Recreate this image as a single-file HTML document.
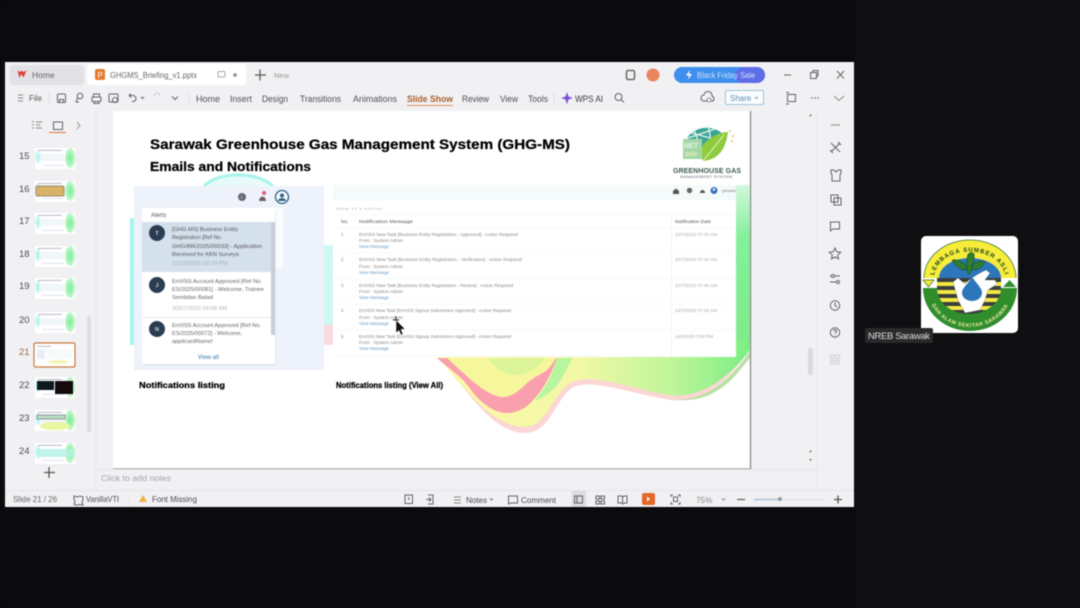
<!DOCTYPE html>
<html><head><meta charset="utf-8"><style>
html,body{margin:0;padding:0;width:1080px;height:608px;overflow:hidden;background:#0b0b0d}
svg{display:block;position:absolute;left:0;top:0;filter:blur(.45px)}
text{font-family:"Liberation Sans",sans-serif;fill:#4d4d50}
.r{font-size:9px;fill:#505054}
.b{font-weight:bold;fill:#000;stroke:#000;stroke-width:.25px}
.a{font-size:5.4px;fill:#666}
.d{font-size:5px;fill:#aab}
.m{font-size:4.5px;fill:#888}
.l{font-size:4.5px;fill:#6d9bc0}
.i{fill:none;stroke:#626367;stroke-width:1}
</style></head><body>
<svg width="1080" height="608" viewBox="0 0 1080 608" xmlns="http://www.w3.org/2000/svg">
<defs>
<linearGradient id="gr" x1="0" y1="0" x2="0" y2="1"><stop offset="0" stop-color="#d4f7dd"/><stop offset=".3" stop-color="#84f09a"/><stop offset="1" stop-color="#7eea88"/></linearGradient>
<linearGradient id="wv" x1="0" y1="0" x2="1" y2="0"><stop offset="0" stop-color="#fdf8a8"/><stop offset=".45" stop-color="#f2f8a6"/><stop offset=".75" stop-color="#bff59a"/><stop offset="1" stop-color="#7aef84"/></linearGradient>
<radialGradient id="gb"><stop offset="0" stop-color="#79ee92"/><stop offset="1" stop-color="#c8f7d2"/></radialGradient>
<radialGradient id="cb"><stop offset="0" stop-color="#a4f1ec"/><stop offset="1" stop-color="#e4faf8"/></radialGradient>
<g id="th"><rect x="0" y="0" width="40" height="21" fill="#fff"/><ellipse cx="35" cy="10" rx="5" ry="10" fill="url(#gb)"/><ellipse cx="3" cy="9" rx="3" ry="7" fill="url(#cb)"/><rect x="3" y="2" width="24" height=".8" fill="#aab"/><rect x="5" y="6" width="24" height="7" fill="#f1f6f9"/><rect x="7" y="17" width="22" height=".8" fill="#dde"/></g>
<path id="arcT" d="M934 278A35 26 0 0 1 1005 278"/>
<path id="arcB" d="M929 292A41 35 0 0 0 1011 292"/>
</defs>

<rect width="1080" height="608" fill="#0b0b0d"/>
<rect x="855" y="0" width="225" height="608" fill="#0f0f12"/>

<!-- window -->
<rect x="5" y="62" width="849" height="445" fill="#f1f1f4"/>
<rect x="10" y="65" width="74" height="20" rx="3" fill="#e2e2e6"/>
<rect x="87" y="64" width="159" height="21" rx="3" fill="#fff"/>
<path d="M18 71l1.500 6 2-3.500 2 3.500 2.500-6-2.500 1.500-2-1.500-2 1.500z" fill="#e2403a" stroke="#e2403a" stroke-width=".6"/>
<text x="32" y="78" font-size="8.500" style="fill:#666">Home</text>
<rect x="95" y="69" width="10" height="11" rx="2" fill="#e57a2c"/>
<text x="97.500" y="78" font-size="8" style="fill:#fff">P</text>
<text x="110" y="78" font-size="8.500" style="fill:#666" textLength="87" lengthAdjust="spacingAndGlyphs">GHGMS_Briefing_v1.pptx</text>
<rect x="218" y="71.500" width="7" height="5.500" rx="1" class="i" style="stroke:#aaa"/>
<circle cx="235" cy="75" r="1.700" fill="#888"/>
<path d="M260 69.500v11M255 75h11" stroke="#555" stroke-width="1.200"/>
<text x="274" y="78" font-size="7.500" style="fill:#999">New</text>
<rect x="626.500" y="70.500" width="8" height="9" rx="1.500" class="i" stroke-width="1.300" style="stroke:#555;stroke-width:1.300"/>
<circle cx="653" cy="75" r="6.500" fill="#e8875d"/>
<rect x="674" y="67" width="91" height="16" rx="8" fill="#3f8fee"/>
<rect x="735" y="67" width="30" height="16" rx="8" fill="#5d6de8"/>
<path d="M690 70l-4 5.500h3l-1 4 4-5.500h-3z" fill="#fff"/>
<text x="697" y="78" font-size="8" style="fill:#cfe1fa" textLength="58" lengthAdjust="spacingAndGlyphs">Black Friday Sale</text>
<path d="M784 75h7" stroke="#666"/>
<rect x="810.500" y="72.500" width="6" height="6" class="i"/><path d="M813 72v-1.500h5v5.500h-1.500" class="i"/>
<path d="M837 71l7 7.500M844 71l-7 7.500" stroke="#666"/>

<!-- ribbon -->
<path d="M18 95h5M18 98h5M18 101h5" stroke="#888"/>
<text x="29" y="101" font-size="8" style="fill:#555">File</text>
<path d="M49 92v12" stroke="#e2e2e5"/>
<rect x="57.500" y="94" width="8" height="8.500" rx="1" class="i"/><path d="M59.500 102.500v-3h4v3" class="i"/>
<circle cx="80" cy="96" r="2.800" class="i"/><path d="M77.500 98l-1.500 4h3" class="i"/>
<rect x="92" y="97" width="9" height="4.500" rx="1" class="i"/><path d="M93.500 97v-3h6v3M94 101v2.500h5v-2.500" class="i"/>
<rect x="109" y="94" width="9" height="8" rx="1" class="i"/><circle cx="115" cy="100" r="2.500" class="i"/>
<path d="M129 95.500h4a3 3 0 0 1 0 6h-1M129 95.500l2-2M129 95.500l2 2" class="i"/>
<path d="M141 97l1.500 1.500 1.500-1.500" class="i"/>
<path d="M154 96a3 3 0 0 1 6 0" class="i" style="stroke:#cfcfd2"/>
<path d="M172 96.500l3 3 3-3" class="i"/>
<path d="M189 92v12" stroke="#e2e2e5"/>
<text x="196" y="102" class="r" textLength="24" lengthAdjust="spacingAndGlyphs">Home</text>
<text x="230" y="102" class="r" textLength="22" lengthAdjust="spacingAndGlyphs">Insert</text>
<text x="262" y="102" class="r" textLength="26" lengthAdjust="spacingAndGlyphs">Design</text>
<text x="300" y="102" class="r" textLength="41" lengthAdjust="spacingAndGlyphs">Transitions</text>
<text x="353" y="102" class="r" textLength="44" lengthAdjust="spacingAndGlyphs">Animations</text>
<text x="407" y="102" class="r" textLength="46" lengthAdjust="spacingAndGlyphs" style="font-weight:bold;fill:#a8622f">Slide Show</text>
<rect x="407" y="105" width="46" height="1" fill="#d98e55"/>
<text x="462" y="102" class="r" textLength="27" lengthAdjust="spacingAndGlyphs">Review</text>
<text x="500" y="102" class="r" textLength="18" lengthAdjust="spacingAndGlyphs">View</text>
<text x="528" y="102" class="r" textLength="20" lengthAdjust="spacingAndGlyphs">Tools</text>
<path d="M554 92v12" stroke="#e2e2e5"/>
<path d="M567 92l1.500 4.500 4.500 1.500-4.500 1.500-1.500 5-1.500-5-4.500-1.500 4.500-1.500z" fill="#7b52d8"/>
<text x="575" y="102" class="r" textLength="28" lengthAdjust="spacingAndGlyphs" style="fill:#3c3c40">WPS AI</text>
<circle cx="618.500" cy="97" r="3.500" class="i"/><path d="M621 99.500l3 3" class="i"/>
<path d="M704 101a3 3 0 0 1 0-6 4 4 0 0 1 8 1 3 3 0 0 1 1 5z" class="i"/><circle cx="709" cy="100" r="2" fill="#f1f1f4" stroke="#777" stroke-width=".8"/>
<rect x="725.500" y="90.500" width="38" height="14" rx="1.500" fill="#fafcff" stroke="#9cc2da"/>
<text x="730" y="101" font-size="8" style="fill:#5c90b4">Share</text>
<path d="M755 97l1.500 1.500 1.500-1.500" stroke="#999" fill="none"/>
<rect x="787.500" y="94.500" width="8" height="7" class="i"/><path d="M786 92.500h3M789 104h-3" class="i"/>
<circle cx="812" cy="98" r=".7" fill="#555"/><circle cx="815" cy="98" r=".7" fill="#555"/><circle cx="818" cy="98" r=".7" fill="#555"/>
<path d="M834 96l5 4.500 5-4.500" stroke="#888" fill="none"/>

<!-- left panel -->
<path d="M96 110v380" stroke="#e8e8eb"/>
<path d="M32 121.500h2M32 124.500h2M32 128h2M36 122h6M36 125h4M36 128h6" stroke="#888"/>
<rect x="53.500" y="122" width="9" height="7.500" class="i"/>
<rect x="49" y="132" width="17" height="1" fill="#d9703a"/>
<path d="M77 122l3 3.500-3 3.500" class="i" style="stroke:#999"/>
<g font-size="9.500">
<text x="19" y="159">15</text><text x="19" y="192">16</text><text x="19" y="224">17</text><text x="19" y="257">18</text><text x="19" y="289">19</text><text x="19" y="323">20</text><text x="19" y="355" style="fill:#9a6a48">21</text><text x="19" y="388">22</text><text x="19" y="421">23</text><text x="19" y="454">24</text>
</g>
<use href="#th" x="35" y="148"/>
<use href="#th" x="35" y="181"/><rect x="36" y="186" width="28" height="10" rx="1" fill="#d8b266" stroke="#776" stroke-width=".7"/>
<use href="#th" x="35" y="213"/>
<use href="#th" x="35" y="246"/>
<use href="#th" x="35" y="278"/>
<use href="#th" x="35" y="312"/>
<rect x="34" y="343" width="41" height="24" rx="1.500" fill="#fff" stroke="#c9783f" stroke-width="1.200"/>
<rect x="37" y="346" width="14" height=".8" fill="#aab"/><rect x="37" y="349" width="8" height="10" fill="#e8eef7"/><rect x="46" y="349" width="26" height="10" fill="#f7fafb"/><ellipse cx="58" cy="362" rx="10" ry="2" fill="#f4f5b8"/>
<use href="#th" x="35" y="377"/>
<rect x="37" y="381" width="17" height="9" fill="#0b1a1f"/><rect x="55" y="381" width="18" height="13" fill="#14090d"/>
<use href="#th" x="35" y="410"/><rect x="37" y="415" width="28" height="4" fill="#b7e0c2" stroke="#778" stroke-width=".7"/><ellipse cx="55" cy="426" rx="15" ry="4" fill="#eaf6a0"/>
<use href="#th" x="35" y="443"/><rect x="37" y="449" width="36" height="8" fill="#b6f2ea" opacity=".8"/>
<rect x="87" y="316" width="4" height="116" rx="2" fill="#dedee1"/>
<path d="M49 467v11M44 472.500h11" stroke="#555" stroke-width="1.300"/>

<!-- slide -->
<rect x="113" y="111" width="637" height="357" fill="#fff"/>
<path d="M750.500 111v358H113" fill="none" stroke="#88888b" stroke-width="1.300"/>

<!-- art -->
<path d="M130 218h4v127h-4z" fill="#a5f4f0"/>
<path d="M202 186q12-13 36-13t37 13z" fill="#e6fbf9"/>
<path d="M204 186q12-11 34-11t35 11" fill="none" stroke="#a8f3ed" stroke-width="3"/>
<path d="M324 245h9v80h-9z" fill="#cdf8f5"/>
<path d="M324 325h9v20h-9z" fill="#fbdbe0"/>
<path d="M736 185h14v165l-14 8z" fill="url(#gr)"/>
<path d="M437 357C465 385 490 433 525 433C550 433 555 400 572 388C590 378 625 392 670 400C700 404 725 385 750 350V340H437Z" fill="#fbd6d4"/>
<path d="M437 357C463 384 490 427 525 427C546 427 552 396 570 383C590 372 625 387 668 395C698 399 725 382 750 350V340H437Z" fill="url(#wv)"/>
<path d="M437 358C447 367 456 373 463 380C470 388 474 395 480 400C488 408 498 413 507 413C517 413 527 408 533 400C545 388 552 372 557 358Z" fill="#fa9fae"/>
<path d="M447 358C458 368 468 378 480 387C488 393 496 397 503 397C513 397 521 389 527 383C534 377 542 374 547 370C551 366 554 362 556 358Z" fill="#f6f79c"/>
<path d="M488 358C497 372 510 378 524 374C534 370 541 364 545 358Z" fill="#dcf59a"/>
<path d="M557 358C552 376 545 390 534 401C548 396 558 386 563 376C566 370 570 364 572 358Z" fill="#b8f5a0"/>
<path d="M676 399C700 402 728 384 750 351V358L740 370C725 390 700 404 676 399Z" fill="#a9d890" opacity=".8"/>

<!-- left screenshot -->
<rect x="134" y="186" width="190" height="184" fill="#eef3fb"/>
<circle cx="242" cy="197" r="4" fill="#667"/>
<text x="241" y="199" font-size="6" style="fill:#ddd">i</text>
<path d="M259 201a3.500 4 0 0 1 7 0z" fill="#665"/><path d="M260 198a3 3 0 0 1 5 0v3h-5z" fill="#735a66"/><circle cx="264" cy="193" r="2" fill="#e25c71"/>
<circle cx="282" cy="197" r="6.500" fill="#f5f8fb" stroke="#2f6486" stroke-width="1.300"/>
<circle cx="282" cy="195.500" r="2" fill="#2f6486"/><path d="M278 201a4 3 0 0 1 8 0z" fill="#2f6486"/>
<rect x="274" y="208" width="9" height="60" fill="#fbfcfe"/>
<rect x="143" y="211" width="133" height="155" fill="#dfe4ec" opacity=".8"/>
<rect x="142" y="208" width="133" height="156" fill="#fff"/>
<text x="151" y="217" font-size="6" style="fill:#555">Alerts</text>
<rect x="142" y="222" width="133" height="50" fill="#d5e0ed"/>
<rect x="271" y="222" width="4" height="113" fill="#c6ced9"/>
<circle cx="157" cy="233" r="8" fill="#2c3c52"/><circle cx="157" cy="285" r="8" fill="#2c3c52"/><circle cx="157" cy="329" r="8" fill="#2c3c52"/>
<g font-size="5.500" text-anchor="middle"><text x="157" y="235" style="fill:#cdd;font-weight:bold">T</text><text x="157" y="287" style="fill:#cdd;font-weight:bold">J</text><text x="157" y="331" style="fill:#cdd;font-weight:bold">N</text></g>
<text x="172" y="231" class="a" textLength="66" lengthAdjust="spacingAndGlyphs" style="fill:#555">[GHG-MS] Business Entity</text>
<text x="172" y="239" class="a" textLength="50" lengthAdjust="spacingAndGlyphs" style="fill:#555">Registration [Ref No.</text>
<text x="172" y="248" class="a" textLength="90" lengthAdjust="spacingAndGlyphs" style="fill:#555">GHG/BR/2025/00033] - Application</text>
<text x="172" y="256" class="a" textLength="67" lengthAdjust="spacingAndGlyphs" style="fill:#555">Received for KKN Surveys</text>
<text x="172" y="265" class="d" textLength="56" lengthAdjust="spacingAndGlyphs" style="fill:#9db0c2">21/10/2025 02:19 PM</text>
<text x="172" y="283" class="a" textLength="90" lengthAdjust="spacingAndGlyphs">EnViSS Account Approved [Ref No.</text>
<text x="172" y="291" class="a" textLength="92" lengthAdjust="spacingAndGlyphs">ES/2025/00081] - Welcome, Trainee</text>
<text x="172" y="299" class="a" textLength="41" lengthAdjust="spacingAndGlyphs">Sembilan Balad</text>
<text x="172" y="310" class="d" textLength="55" lengthAdjust="spacingAndGlyphs" style="fill:#b3b6bb">30/07/2025 09:08 AM</text>
<path d="M142 317.500h129" stroke="#dde0e4" stroke-width=".7"/>
<text x="172" y="327" class="a" textLength="89" lengthAdjust="spacingAndGlyphs">EnViSS Account Approved [Ref No.</text>
<text x="172" y="335" class="a" textLength="70" lengthAdjust="spacingAndGlyphs">ES/2025/00072] - Welcome,</text>
<text x="172" y="343" class="a" textLength="41" lengthAdjust="spacingAndGlyphs">applicantName!</text>
<text x="198" y="359" font-size="6.500" style="font-weight:bold;fill:#6b9cbc" textLength="21" lengthAdjust="spacingAndGlyphs">View all</text>
<text x="139" y="388" font-size="8" class="b" textLength="86" lengthAdjust="spacingAndGlyphs">Notifications listing</text>

<!-- table screenshot -->
<rect x="333" y="185" width="403" height="172" fill="#fff"/>
<rect x="333" y="185" width="403" height="15" fill="#f4fbfa"/>
<path d="M673 191l3-2.500 3 2.500v3h-6z" fill="#555"/><circle cx="689.500" cy="190.500" r="2.700" fill="#666"/><path d="M700 193a2.500 3 0 0 1 5 0z" fill="#555"/>
<circle cx="714" cy="190.500" r="3.500" fill="#3a6ec0"/><circle cx="714" cy="189.500" r="1.200" fill="#fff"/>
<text x="722" y="192" font-size="4" style="fill:#777" textLength="14" lengthAdjust="spacingAndGlyphs">ghmsadm</text>
<text x="336" y="210" font-size="4" style="fill:#aaa" textLength="46">Show  10    v  entries</text>
<path d="M336 214.500h400M336 228h400M336 253h400M336 279h400M336 304h400M336 330h400M336 355.500h400" stroke="#eff1f2" stroke-width=".6"/>
<path d="M671.500 214v142" stroke="#e9ebed" stroke-width=".6"/>
<text x="341" y="223" font-size="4.800" style="fill:#555">No.</text>
<text x="359" y="223" font-size="4.800" style="fill:#555" textLength="54" lengthAdjust="spacingAndGlyphs">Notification Message</text>
<text x="675" y="223" font-size="4.800" style="fill:#555" textLength="36" lengthAdjust="spacingAndGlyphs">Notification Date</text>
<g>
<text x="341" y="236" class="m">1</text><text x="341" y="261" class="m">2</text><text x="341" y="287" class="m">3</text><text x="341" y="312" class="m">4</text><text x="341" y="338" class="m">5</text>
<text x="359" y="236" class="m" textLength="159" lengthAdjust="spacingAndGlyphs">EnVISS New Task [Business Entity Registration - Approved] - Action Required</text>
<text x="359" y="242" class="m" textLength="44" lengthAdjust="spacingAndGlyphs">From : System Admin</text>
<text x="359" y="248" class="l" textLength="30" lengthAdjust="spacingAndGlyphs">View Message</text>
<text x="359" y="261" class="m" textLength="163" lengthAdjust="spacingAndGlyphs">EnVISS New Task [Business Entity Registration - Verification] - Action Required</text>
<text x="359" y="268" class="m" textLength="44" lengthAdjust="spacingAndGlyphs">From : System Admin</text>
<text x="359" y="274" class="l" textLength="30" lengthAdjust="spacingAndGlyphs">View Message</text>
<text x="359" y="287" class="m" textLength="154" lengthAdjust="spacingAndGlyphs">EnVISS New Task [Business Entity Registration - Review] - Action Required</text>
<text x="359" y="293" class="m" textLength="44" lengthAdjust="spacingAndGlyphs">From : System Admin</text>
<text x="359" y="299" class="l" textLength="30" lengthAdjust="spacingAndGlyphs">View Message</text>
<text x="359" y="312" class="m" textLength="152" lengthAdjust="spacingAndGlyphs">EnVISS New Task [EnVISS Signup Submission Approved] - Action Required</text>
<text x="359" y="319" class="m" textLength="44" lengthAdjust="spacingAndGlyphs">From : System Admin</text>
<text x="359" y="325" class="l" textLength="30" lengthAdjust="spacingAndGlyphs">View Message</text>
<text x="359" y="338" class="m" textLength="152" lengthAdjust="spacingAndGlyphs">EnVISS New Task [EnVISS Signup Submission Approved] - Action Required</text>
<text x="359" y="344" class="m" textLength="44" lengthAdjust="spacingAndGlyphs">From : System Admin</text>
<text x="359" y="350" class="l" textLength="30" lengthAdjust="spacingAndGlyphs">View Message</text>
<text x="675" y="236" class="m" textLength="42" lengthAdjust="spacingAndGlyphs" style="fill:#aaa">10/7/2025 07:43 AM</text>
<text x="675" y="261" class="m" textLength="42" lengthAdjust="spacingAndGlyphs" style="fill:#aaa">10/7/2025 07:44 AM</text>
<text x="675" y="287" class="m" textLength="42" lengthAdjust="spacingAndGlyphs" style="fill:#aaa">10/7/2025 07:46 AM</text>
<text x="675" y="312" class="m" textLength="42" lengthAdjust="spacingAndGlyphs" style="fill:#aaa">10/7/2025 07:54 AM</text>
<text x="675" y="338" class="m" textLength="38" lengthAdjust="spacingAndGlyphs" style="fill:#aaa">10/6/2025 3:50 PM</text>
</g>
<text x="336" y="388" font-size="8" class="b" textLength="107" lengthAdjust="spacingAndGlyphs">Notifications listing (View All)</text>

<!-- cursor -->
<path d="M396 320l0 13 3-2.500 2 4.500 2-1-2-4.500 4-.5z" fill="#111" stroke="#fff" stroke-width=".5"/>
<path d="M393 320h6M396 316.500v3" stroke="#222"/>

<!-- title -->
<text x="150" y="149" font-size="14" class="b" textLength="420" lengthAdjust="spacingAndGlyphs">Sarawak Greenhouse Gas Management System (GHG-MS)</text>
<text x="150" y="171" font-size="12.500" class="b" textLength="161" lengthAdjust="spacingAndGlyphs">Emails and Notifications</text>

<!-- GHG logo -->
<path d="M684 145a23 21 0 0 1 43-6l-16 5-8 8-18 1z" fill="#3aa597"/>
<path d="M693 127l7 19M708 124l3 17M685 139l30-10M688 132l22 6" stroke="#e4f4ee" stroke-width="1.300" fill="none"/>
<path d="M703 161q-6-13 5-21t20-8q-2 14-8 21t-17 8z" fill="#8ecb3f"/>
<path d="M703 161l21-26" stroke="#dff0b0" stroke-width="1" fill="none"/>
<rect x="683" y="139" width="19" height="20" fill="#a4d6a6"/>
<text x="684" y="148" font-size="7" style="font-weight:bold;fill:#e6f5e6">NET</text>
<text x="685" y="156" font-size="5.500" style="font-weight:bold;fill:#e8f2c0">2050</text>
<circle cx="730" cy="131" r="1" fill="#d8c85c"/><circle cx="733" cy="136" r="1" fill="#d8c85c"/><circle cx="732" cy="141" r="1" fill="#d8c85c"/>
<text x="673" y="173" font-size="7" style="font-weight:bold;fill:#3c5a52" textLength="68" lengthAdjust="spacing">GREENHOUSE GAS</text>
<text x="680" y="178" font-size="4" style="fill:#567" textLength="52">MANAGEMENT SYSTEM</text>

<!-- notes and right -->
<text x="101" y="481" font-size="8.500" style="fill:#a4a4a8" textLength="70" lengthAdjust="spacingAndGlyphs">Click to add notes</text>
<path d="M96 469.500h724" stroke="#e6e6e9"/>
<path d="M5 490.500h849" stroke="#e6e6e9"/>
<path d="M817 110v380" stroke="#e8e8eb"/>
<rect x="808" y="348" width="5" height="27" rx="2" fill="#dcdcdf"/>
<path d="M809 116l1.500-2 1.500 2z" fill="#777"/>
<path d="M809 452l1.500-2 1.500 2zM809 459l1.500 2 1.500-2z" fill="#777"/>
<path d="M831 125h9" stroke="#999" stroke-width="1.200"/>
<path d="M831 143l9 9M840 143l-9 9M830 150l3 3M838 142l3 3" class="i"/>
<path d="M831 170h3l2 2 2-2h3v3l-1 2v6h-8v-6l-1-2z" class="i"/>
<rect x="831" y="195" width="7" height="7" class="i"/><rect x="834" y="198" width="7" height="7" class="i"/>
<path d="M830.500 222h9v7h-6.500l-2.500 2z" class="i"/>
<path d="M835 248l1.700 3.700 4 .5-3 2.700.8 4-3.500-2-3.500 2 .8-4-3-2.700 4-.5z" class="i"/>
<path d="M830 276h10M830 282h10" class="i"/><circle cx="833" cy="276" r="1.500" fill="#f1f1f4" stroke="#666"/><circle cx="838" cy="282" r="1.500" fill="#f1f1f4" stroke="#666"/>
<circle cx="835" cy="305.500" r="4.700" class="i"/><path d="M835 302.500v3l2 1.500" class="i"/>
<circle cx="835" cy="332.500" r="4.700" class="i"/><path d="M833.500 331a1.500 1.500 0 1 1 2 1.500l-.5 1M835 335v.6" class="i"/>
<g fill="none" stroke="#cfcfd3"><rect x="830.500" y="355" width="3.500" height="3.500"/><rect x="836" y="355" width="3.500" height="3.500"/><rect x="830.500" y="360.500" width="3.500" height="3.500"/><rect x="836" y="360.500" width="3.500" height="3.500"/></g>

<!-- status -->
<text x="13" y="502" font-size="8.200" style="fill:#666" textLength="44" lengthAdjust="spacingAndGlyphs">Slide 21 / 26</text>
<path d="M74 496l3 1 3-1 3 1v3l-1 2 1 3-3-.5-3 .5-3-.5 1-3-1-2z" class="i"/>
<text x="86" y="502" font-size="8.200" textLength="33" lengthAdjust="spacingAndGlyphs">VanillaVTI</text>
<path d="M129 495v12" stroke="#eee4e4"/>
<path d="M143 495l4 7h-8z" fill="#eeb23f"/>
<text x="152" y="502" font-size="8.200" textLength="45" lengthAdjust="spacingAndGlyphs">Font Missing</text>
<rect x="405" y="495" width="7.500" height="8.500" class="i"/><path d="M408.700 497v3" stroke="#666"/>
<path d="M428 495h5v9h-5M426 499.500h5M429 497.500l2 2-2 2" class="i"/>
<path d="M454 497h7M454 500h7M454 503h7" stroke="#888"/>
<text x="466" y="503" font-size="8.200" textLength="21" lengthAdjust="spacingAndGlyphs">Notes</text>
<path d="M490 498.500l1.500 1.500 1.500-1.500" stroke="#777" fill="none"/>
<path d="M508.500 504v-8h9v7h-7z" class="i"/>
<text x="521" y="503" font-size="8.200" textLength="35" lengthAdjust="spacingAndGlyphs">Comment</text>
<rect x="572" y="491" width="14" height="16" fill="#dcdce0"/>
<rect x="574.500" y="496" width="8" height="7" class="i"/><path d="M577 496v7" stroke="#666"/>
<rect x="596" y="496" width="3.500" height="3" class="i"/><rect x="601" y="496" width="3.500" height="3" class="i"/><rect x="596" y="501" width="3.500" height="3" class="i"/><rect x="601" y="501" width="3.500" height="3" class="i"/>
<path d="M618 496h4l1 1 1-1h3v7h-3l-1 1-1-1h-4zM622.500 497v6" class="i"/>
<rect x="642" y="493" width="13" height="12" rx="2" fill="#e3672a"/><path d="M647 496.500l3 2.500-3 2.500z" fill="#fff"/>
<path d="M671 497v-2h2M678 495h2v2M680 502v2h-2M673 504h-2v-2" class="i"/><rect x="673.500" y="497" width="4" height="4.500" class="i"/>
<text x="696" y="503" font-size="8.200" style="fill:#888">75%</text>
<path d="M722 498.500l1.500 1.500 1.500-1.500" stroke="#888" fill="none"/>
<path d="M737 499.500h8" stroke="#666" stroke-width="1.300"/>
<path d="M754 499.500h25" stroke="#9dbbcd" stroke-width="1.200"/><path d="M781 499.500h44" stroke="#dcdcdf" stroke-width="1"/>
<circle cx="780" cy="499" r="2" fill="#999"/>
<path d="M834 499.500h8M838 495.500v8" stroke="#555" stroke-width="1.300"/>

<!-- NREB logo -->
<rect x="921" y="236" width="97" height="97" rx="5" fill="#fff"/>
<path d="M924 278A46 38 0 0 1 1016 278H1001A31 20 0 0 0 939 278Z" fill="#f6ec3a"/>
<path d="M924 278A46 38 0 0 1 1016 278" fill="none" stroke="#3a7a3a" stroke-width=".8"/>
<path d="M939 278A31 20 0 0 1 1001 278Z" fill="#2c76bb"/>
<rect x="937" y="278" width="64" height="38" fill="#3a3f3e"/>
<path d="M937 282h64v4h-64zM937 290h64v4h-64zM937 298h64v4h-64zM937 306h64v4h-64z" fill="#f3ea3f"/>
<path d="M923 288H937A32 26 0 0 0 1001 288H1017A47 43 0 0 1 923 288Z" fill="#2f8d2b"/>
<path d="M923 280h11l-5.500 7z" fill="#f6ec3a" stroke="#3a6b2a" stroke-width=".7"/>
<path d="M1003 287l6.500-7 6.500 7z" fill="#2f8d2b"/>
<path d="M953 282L958 278L965 284C968 280 975 276 980 273L986 270L990 273L985 280L995 280L997 284L988 290L985 300L980 310L965 313L958 300Z" fill="#fff" stroke="#555" stroke-width=".3"/>
<path d="M972 277C977 284 982 288 982 293A10 8 0 0 1 962 293C962 288 968 284 972 277Z" fill="#2c76bb"/>
<path d="M968 274c-2-6-2-13 0-20 3-2 5-2 6 0 1 7-2 14-4 20zM966 270c-6 0-11-4-14-10 6-1 12 2 15 7zM972 270c6 0 11-3 13-8-5-2-11 0-14 4z" fill="#2f7d32" stroke="#153d1a" stroke-width=".5"/>
<text font-size="6" text-anchor="middle" style="font-weight:bold;fill:#1b4320;letter-spacing:1px"><textPath href="#arcT" startOffset="50%">LEMBAGA SUMBER ASLI</textPath></text>
<text font-size="5.300" text-anchor="middle" style="font-weight:bold;fill:#e9e9a2;letter-spacing:.5px"><textPath href="#arcB" startOffset="50%">DAN ALAM SEKITAR SARAWAK</textPath></text>

<rect x="865" y="328" width="68" height="15" rx="2" fill="#2a2a2c"/>
<text x="868" y="339" font-size="9.500" style="fill:#dcdcdc" textLength="62" lengthAdjust="spacing">NREB Sarawak</text>
</svg>
</body></html>
